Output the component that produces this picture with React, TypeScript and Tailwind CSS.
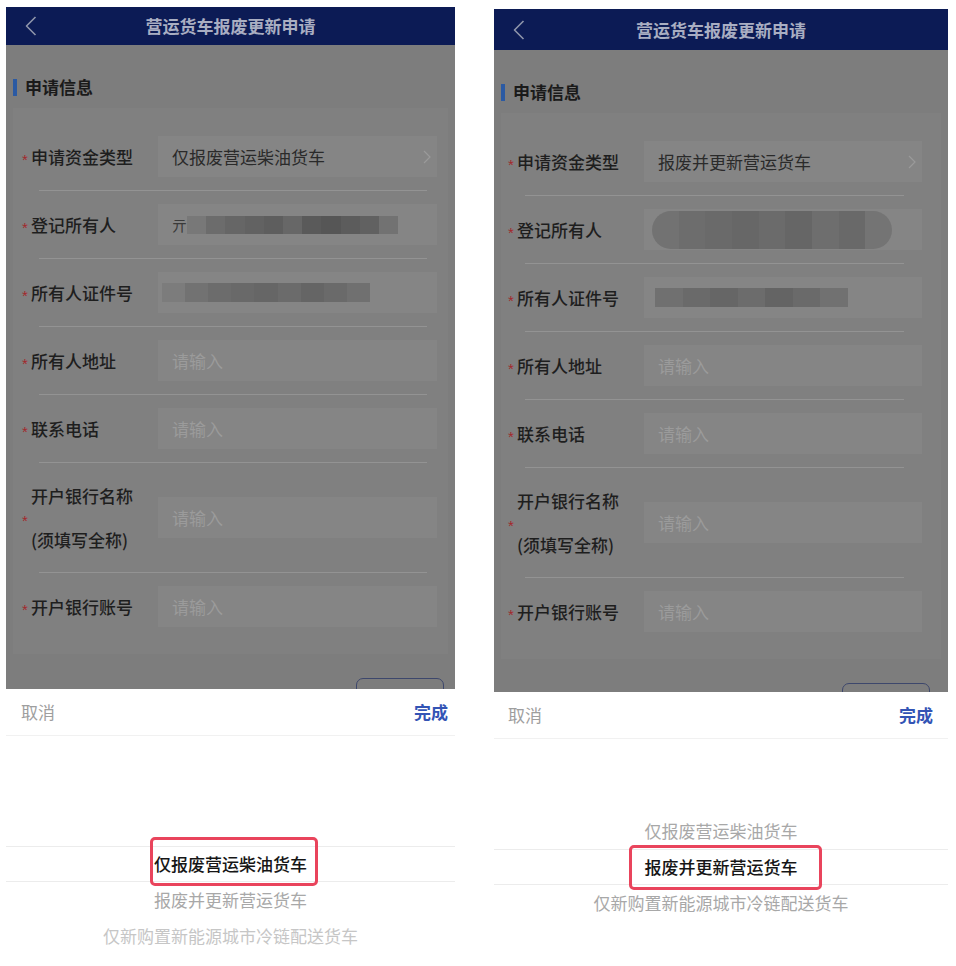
import type { ReactNode } from "react";

const FONT = "font-['Noto_Sans_CJK_SC','Noto_Sans',sans-serif]";

const OPTIONS = ["仅报废营运柴油货车", "报废并更新营运货车", "仅新购置新能源城市冷链配送货车"];

type Variant = {
  frame: string;
  header: string;
  gray: string;
  card: string;
  divider: string;
  button: string;
  actions: string;
  box: string;
  selected: number;
  owner: ReactNode;
  idNo: ReactNode;
};

// pixelated blocks that hide personal data in the screenshot
function Mask({ blocks, className }: { blocks: string[]; className: string }) {
  return (
    <div className={`flex blur-[0.6px] ${className}`}>
      {blocks.map((b, i) => (
        <div key={i} className={`h-full flex-1 ${b}`} />
      ))}
    </div>
  );
}

function BackIcon() {
  return (
    <svg width="12" height="20" viewBox="0 0 12 20" fill="none">
      <polyline points="10.5,1 1.5,10 10.5,19" stroke="#8f95ab" strokeWidth="1.6" strokeLinejoin="round" />
    </svg>
  );
}

function Arrow() {
  return (
    <svg width="8" height="14" viewBox="0 0 8 14" fill="none">
      <polyline points="1,1 7,7 1,13" stroke="#9a9a9a" strokeWidth="1.2" />
    </svg>
  );
}

function Star() {
  return (
    <span className="w-[9px] shrink-0 pt-[5px] font-['Liberation_Sans',sans-serif] text-[15px] leading-none text-[#a3282c]">
      *
    </span>
  );
}

function Row({ label, tall, children }: { label: ReactNode; tall?: boolean; children?: ReactNode }) {
  return (
    <div className={`flex items-center ${tall ? "h-[109px]" : "h-[67px]"}`}>
      <div className="flex w-[136px] shrink-0 items-center text-[17px] font-medium text-[#1e1e1e]">
        <Star />
        {label}
      </div>
      <div className="flex h-[41px] flex-1 items-center bg-[#858585] pl-[14px] pr-[6px] text-[17px]">
        {children ?? <span className="text-[#9b9b9b]">请输入</span>}
      </div>
    </div>
  );
}

function Phone({ v }: { v: Variant }) {
  const d = <div className={`h-px bg-[#939393] ${v.divider}`} />;
  return (
    <div className={`flex flex-col ${v.frame}`}>
      <div className={`flex items-center bg-[#0c1b55] ${v.header}`}>
        <div className="w-[48px] pl-[19px]">
          <BackIcon />
        </div>
        <div className="flex-1 text-center text-[17px] font-bold text-[#a9aec2]">营运货车报废更新申请</div>
        <div className="w-[48px]" />
      </div>

      <div className={`flex flex-col overflow-hidden bg-[#7d7d7d] px-[7px] pt-[32px] ${v.gray}`}>
        <div className="flex h-[20px] items-center">
          <div className="h-[17px] w-[4px] bg-[#2b5aa3]" />
          <span className="ml-[8px] text-[17px] font-bold text-[#1a1a1a]">申请信息</span>
        </div>

        <div className={`mt-[11px] bg-[#808080] pt-[15px] pb-[14px] ${v.card}`}>
          <Row label="申请资金类型">
            <span className="flex-1 text-[#2a2a2a]">{OPTIONS[v.selected]}</span>
            <Arrow />
          </Row>
          {d}
          <Row label="登记所有人">{v.owner}</Row>
          {d}
          <Row label="所有人证件号">{v.idNo}</Row>
          {d}
          <Row label="所有人地址" />
          {d}
          <Row label="联系电话" />
          {d}
          <Row
            tall
            label={
              <div className="flex flex-col gap-[22px] leading-[22px]">
                <span>开户银行名称</span>
                <span>(须填写全称)</span>
              </div>
            }
          />
          {d}
          <Row label="开户银行账号" />
        </div>

        <div className={`mt-[24px] flex justify-end ${v.button}`}>
          <div className="h-[40px] w-[88px] shrink-0 rounded-[7px] border-[1.5px] border-[#3d476c]" />
        </div>
      </div>

      <div className="flex flex-1 flex-col bg-white">
        <div className={`flex h-[46px] items-center justify-between text-[17px] ${v.actions}`}>
          <span className="text-[#9e9e9e]">取消</span>
          <span className="font-semibold text-[#3354b5]">完成</span>
        </div>
        <div className="h-px bg-[#f1f1f1]" />
        <div className="flex flex-col pt-[38px]">
          {[0, 1, 2, 3, 4].map((slot) => {
            const idx = slot - 2 + v.selected;
            const text = idx >= 0 && idx < OPTIONS.length ? OPTIONS[idx] : "";
            const dist = Math.abs(slot - 2);
            if (dist === 0) {
              return (
                <div key={slot} className="flex h-[36px] items-center justify-center border-y border-[#ececec]">
                  <span className="relative text-[17px] font-medium leading-[34px] text-[#161616]">
                    {text}
                    <span className={`absolute rounded-[5px] border-[3px] border-[#e9445c] ${v.box}`} />
                  </span>
                </div>
              );
            }
            return (
              <div
                key={slot}
                className={`flex h-[36px] items-center justify-center text-[17px] ${
                  dist === 1 ? "text-[#a8a8a8]" : "text-[#c6c6c6]"
                }`}
              >
                {text}
              </div>
            );
          })}
        </div>
      </div>
    </div>
  );
}

const LEFT: Variant = {
  frame: "ml-[6px] mt-[7px] w-[449px]",
  header: "h-[38px]",
  gray: "h-[644px]",
  card: "pl-[9px] pr-[11px]",
  divider: "ml-[17px] mr-[10px]",
  button: "mr-[4px]",
  actions: "pl-[15px] pr-[7px]",
  box: "-left-[4px] -right-[11px] -top-[10px] -bottom-[5px]",
  selected: 0,
  owner: (
    <div className="flex h-[19px] w-[226px] items-center">
      <span className="text-[15px] leading-none text-[#3a3a3a]">亓</span>
      <Mask
        className="h-[18px] flex-1"
        blocks={[
          "bg-[#787878]",
          "bg-[#6c6c6c]",
          "bg-[#666666]",
          "bg-[#626262]",
          "bg-[#5e5e5e]",
          "bg-[#676767]",
          "bg-[#5a5a5a]",
          "bg-[#565656]",
          "bg-[#5c5c5c]",
          "bg-[#616161]",
          "bg-[#727272]",
        ]}
      />
    </div>
  ),
  idNo: (
    <Mask
      className="-ml-[10px] h-[19px] w-[208px]"
      blocks={[
        "bg-[#7c7c7c]",
        "bg-[#727272]",
        "bg-[#6c6c6c]",
        "bg-[#696969]",
        "bg-[#666666]",
        "bg-[#6b6b6b]",
        "bg-[#656565]",
        "bg-[#6a6a6a]",
        "bg-[#707070]",
      ]}
    />
  ),
};

const RIGHT: Variant = {
  frame: "ml-[39px] mt-[9px] w-[454px]",
  header: "h-[41px]",
  gray: "h-[642px]",
  card: "pl-[7px] pr-[19px]",
  divider: "ml-[17px] mr-[18px]",
  button: "mr-[11px]",
  actions: "pl-[14px] pr-[15px]",
  box: "-left-[16px] -right-[24px] -top-[5px] -bottom-[6px]",
  selected: 1,
  owner: (
    <Mask
      className="-ml-[6px] h-[38px] w-[240px] overflow-hidden rounded-[19px]"
      blocks={[
        "bg-[#727272]",
        "bg-[#6d6d6d]",
        "bg-[#6a6a6a]",
        "bg-[#676767]",
        "bg-[#6b6b6b]",
        "bg-[#666666]",
        "bg-[#6e6e6e]",
        "bg-[#696969]",
        "bg-[#747474]",
      ]}
    />
  ),
  idNo: (
    <Mask
      className="-ml-[3px] h-[19px] w-[193px]"
      blocks={[
        "bg-[#707070]",
        "bg-[#6a6a6a]",
        "bg-[#666666]",
        "bg-[#6c6c6c]",
        "bg-[#646464]",
        "bg-[#6a6a6a]",
        "bg-[#717171]",
      ]}
    />
  ),
};

export default function App() {
  return (
    <div className={`flex h-[966px] w-[956px] overflow-hidden bg-white ${FONT}`}>
      <Phone v={LEFT} />
      <Phone v={RIGHT} />
    </div>
  );
}
